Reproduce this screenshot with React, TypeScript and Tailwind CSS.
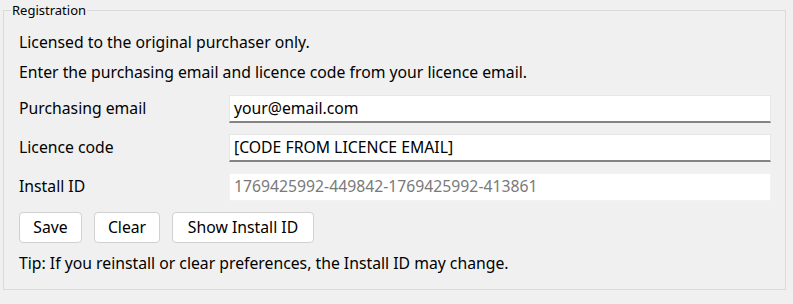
export default function App() {
  return (
    <div className="w-[793px] h-[304px] bg-[#f0f0f0] pt-[3px] px-[3px] text-[#000] font-['Segoe_UI','Noto_Sans',sans-serif]">
      <fieldset className="border border-[#dadada] w-[783px] h-[287px] pl-[15px] pr-[14px]">
        <legend className="ml-[-8px] px-[1px] text-[13px] leading-[15px]">Registration</legend>
        <div className="flex flex-col text-[15.75px]">
          <div className="h-[30px] flex items-center mt-[10px]">Licensed to the original purchaser only.</div>
          <div className="h-[30px] flex items-center">Enter the purchasing email and licence code from your licence email.</div>
          <div className="grid grid-cols-[210px_1fr] gap-y-[11px] mt-[7px]">
            <div className="flex items-center h-[28px]">Purchasing email</div>
            <div className="h-[28px] bg-white border border-[#e6e6e6] border-b-2 border-b-[#838383] flex items-center px-[4px]">your@email.com</div>
            <div className="flex items-center h-[28px]">Licence code</div>
            <div className="h-[28px] bg-white border border-[#e6e6e6] border-b-2 border-b-[#838383] flex items-center px-[4px]">[CODE FROM LICENCE EMAIL]</div>
            <div className="flex items-center h-[28px]">Install ID</div>
            <div className="h-[28px] bg-white border border-[#f2f2f2] flex items-center px-[4px] text-[#7a7a7a]">1769425992-449842-1769425992-413861</div>
          </div>
          <div className="flex gap-[12px] mt-[11px]">
            <button className="h-[31px] w-[63px] bg-white border border-[#d0d0d0] rounded-[4px]">Save</button>
            <button className="h-[31px] w-[66px] bg-white border border-[#d0d0d0] rounded-[4px]">Clear</button>
            <button className="h-[31px] w-[142px] bg-white border border-[#d0d0d0] rounded-[4px]">Show Install ID</button>
          </div>
          <div className="h-[30px] flex items-center mt-[6px]">Tip: If you reinstall or clear preferences, the Install ID may change.</div>
        </div>
      </fieldset>
    </div>
  )
}
